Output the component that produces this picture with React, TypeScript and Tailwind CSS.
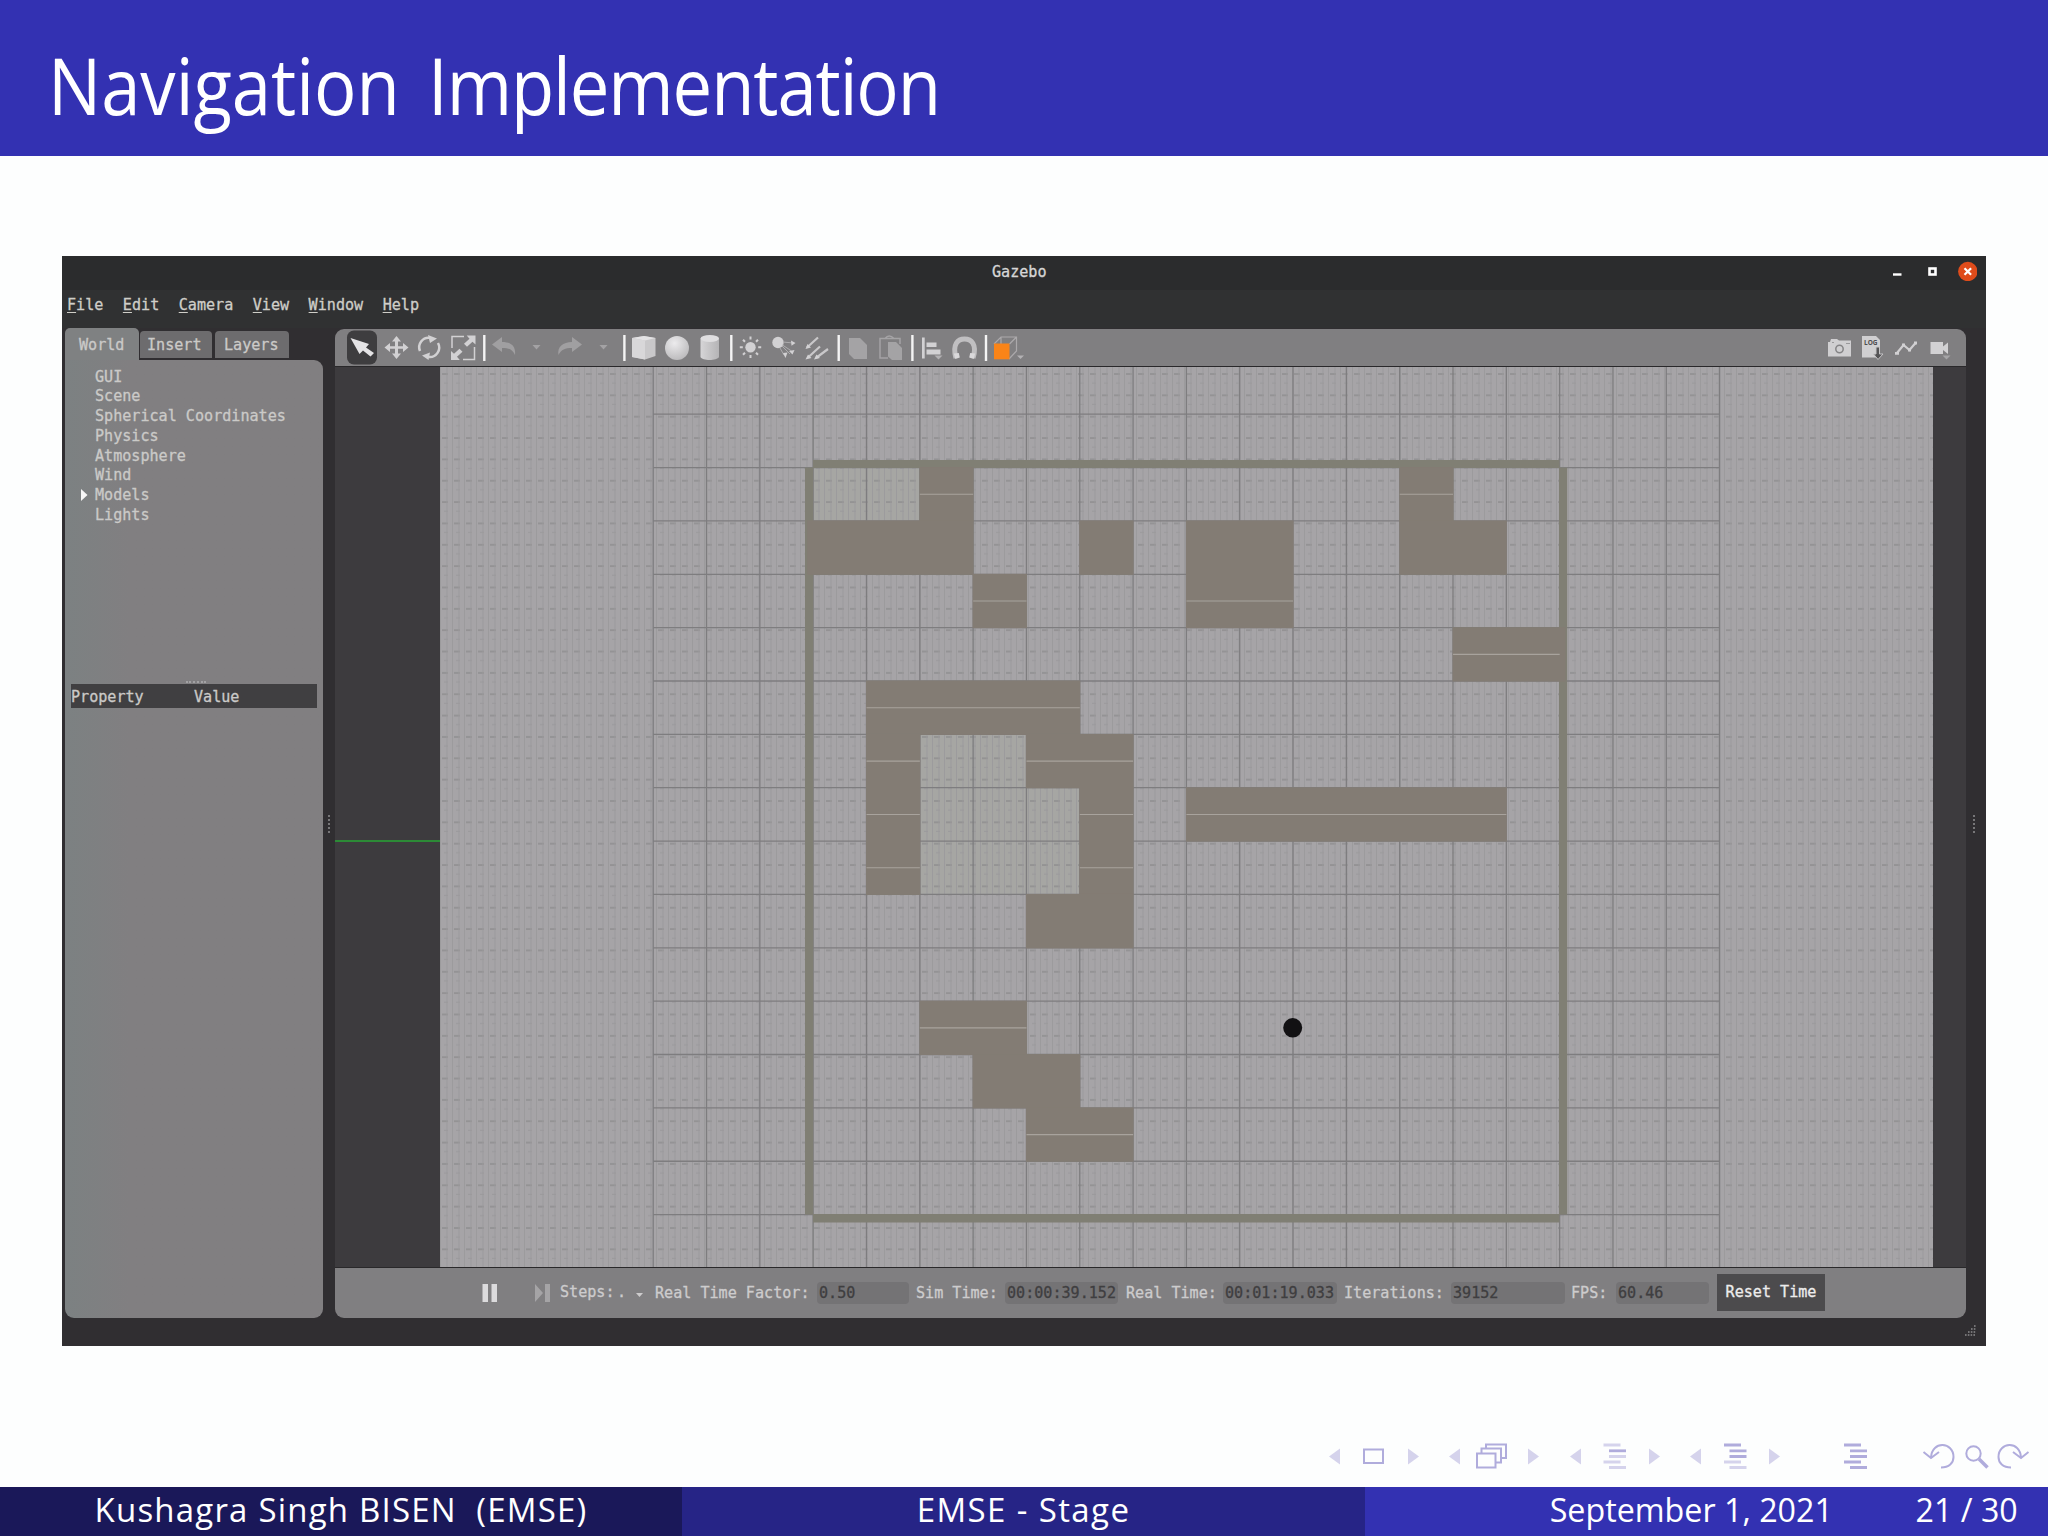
import type { ReactNode } from "react";

const mono = "font-['DejaVu_Sans_Mono',monospace]";
const sans = "font-['Open_Sans',sans-serif]";

const CELL = 53.32;
const LEFT = 813.2;
const TOP = 467.6;

// [column, row, columns, rows]
const blocks = [
  [2, 0, 1, 1],
  [-0.1, 1, 3.1, 1],
  [3, 2, 1, 1],
  [5, 1, 1, 1],
  [7, 1, 2, 2],
  [11, 0, 1, 1],
  [11, 1, 2, 1],
  [12, 3, 2.1, 1],
  [1, 4, 4, 1],
  [1, 5, 1, 3],
  [4, 5, 2, 1],
  [5, 6, 1, 2],
  [4, 8, 2, 1],
  [7, 6, 6, 1],
  [2, 10, 2, 1],
  [3, 11, 2, 1],
  [4, 12, 2, 1],
];

// [column, row, columns], the light seam halfway down a cell
const seams = [
  [2, 0, 1],
  [11, 0, 1],
  [3, 2, 1],
  [7, 2, 2],
  [12, 3, 2],
  [1, 4, 4],
  [1, 5, 1],
  [4, 5, 2],
  [1, 6, 1],
  [5, 6, 1],
  [7, 6, 6],
  [1, 7, 1],
  [5, 7, 1],
  [2, 10, 2],
  [4, 12, 2],
];

const treeItems = ["GUI", "Scene", "Spherical Coordinates", "Physics", "Atmosphere", "Wind", "Models", "Lights"];
const menuItems = ["File", "Edit", "Camera", "View", "Window", "Help"];

// every toolbar glyph shares one coordinate space, sliced by x
function Tool({ x, w, children }: { x: number; w: number; children?: ReactNode }) {
  return (
    <svg className="shrink-0" width={w} height={37} viewBox={`${x} 329 ${w} 37`} fill="#d2d1d3">
      {children}
    </svg>
  );
}

function Sep({ x, w, at }: { x: number; w: number; at: number }) {
  return (
    <Tool x={x} w={w}>
      <rect x={at - 1.2} y="335" width="2.4" height="26" fill="#f4f4f4" />
    </Tool>
  );
}

function Toolbar() {
  return (
    <div className="flex h-[37px] shrink-0 rounded-tl-[9px] rounded-tr-[9px] bg-[#807f81]">
      <Tool x={335} w={45}>
        <rect x="347" y="330.5" width="30" height="34" rx="7" fill="#3e3d3f" />
        <path d="M350.500 338 L369 344 L366 347.500 L374 353 L370.500 356.500 L363 350.500 L359.500 354 Z" fill="#e4e3e5" />
      </Tool>
      <Tool x={380} w={33}>
        <path d="M396.500 336 l4.500 5.500 h-3 v4.700 h5 v-3.200 l5.500 4.500 l-5.500 4.500 v-3.200 h-5 v4.700 h3 l-4.500 5.500 l-4.500 -5.500 h3 v-4.700 h-5 v3.200 l-5.500 -4.500 l5.500 -4.500 v3.200 h5 v-4.700 h-3 Z" />
      </Tool>
      <Tool x={413} w={33}>
        <path d="M420 351 A9.500 9.500 0 0 1 430 337.800 M438 343 A9.500 9.500 0 0 1 428.500 357" fill="none" stroke="#d2d1d3" strokeWidth="2.500" />
        <path d="M428 335 l9 3.500 l-7 4.500 Z M430 352.500 l-8 3 l6.500 4.500 Z" />
      </Tool>
      <Tool x={446} w={34}>
        <path d="M464 336.500 H452 V348 M474.500 347 V359.500 H463" fill="none" stroke="#d2d1d3" strokeWidth="1.500" />
        <path d="M475.500 335.500 v9 l-3 -2.700 l-5.500 5 l-3 -3 l5.500 -5 l-2.800 -3.300 Z M451 360 v-9 l3 2.700 l5.500 -5 l3 3 l-5.500 5 l2.800 3.300 Z" />
      </Tool>
      <Sep x={480} w={8} at={484.3} />
      <Tool x={488} w={38}>
        <path d="M492 344.500 L502 337 V342 C511 342 516 346 515 355 C512.500 349.500 509 348 502 348 V352 Z" fill="#a09fa1" />
      </Tool>
      <Tool x={526} w={24}>
        <path d="M532.500 345 h8 l-4 4.500 Z" fill="#a3a2a4" />
      </Tool>
      <Tool x={550} w={40}>
        <path d="M582 344.500 L572 337 V342 C563 342 557 347 558.500 355 C561.500 349.500 565 348 572 348 V352 Z" fill="#a09fa1" />
      </Tool>
      <Tool x={590} w={26}>
        <path d="M599.500 345 h8 l-4 4.500 Z" fill="#a3a2a4" />
      </Tool>
      <Sep x={616} w={12} at={624.4} />
      <Tool x={628} w={32}>
        <path d="M632 338 L644 336 L655.500 338 V356 L645 359.500 L632 357 Z" fill="#c9c8ca" />
        <path d="M632 338 L644 336 L655.500 338 L645 340.500 Z" fill="#e4e3e5" />
        <path d="M632 338 L645 340.500 V359.500 L632 357 Z" fill="#d8d7d9" />
      </Tool>
      <Tool x={660} w={34}>
        <defs>
          <radialGradient id="ball" cx="0.4" cy="0.3" r="0.7">
            <stop offset="0" stopColor="#ecebed" />
            <stop offset="1" stopColor="#bdbcbe" />
          </radialGradient>
        </defs>
        <circle cx="677" cy="348" r="12" fill="url(#ball)" />
      </Tool>
      <Tool x={694} w={30}>
        <defs>
          <linearGradient id="tube">
            <stop offset="0" stopColor="#d6d5d7" />
            <stop offset="1" stopColor="#b5b4b6" />
          </linearGradient>
        </defs>
        <path d="M700.500 338.500 V357 C702 361 717 361 719 357 V338.500 Z" fill="url(#tube)" />
        <ellipse cx="709.800" cy="338.500" rx="9.200" ry="3.400" fill="#dfdee0" />
      </Tool>
      <Sep x={724} w={14} at={731.3} />
      <Tool x={738} w={26}>
        <circle cx="750.500" cy="347.300" r="5.200" />
        <path d="M750.500 336.500 v3 M750.500 355 v3 M739.800 347.300 h3 M758.200 347.300 h3 M743 339.700 l2 2 M756 352.700 l2 2 M743 354.800 l2 -2 M756 341.800 l2 -2" stroke="#d2d1d3" strokeWidth="2" />
      </Tool>
      <Tool x={764} w={36}>
        <circle cx="778" cy="342.500" r="5.700" />
        <path d="M783 342 l10 1 M782.500 345 l9 6 M780 348 l4 7 M782 346 l8 8" stroke="#adacae" strokeWidth="1" />
        <path d="M791 340.500 l4.500 2.500 l-4 2.800 Z M789 351 l5.500 -1 l-2 4.500 Z M783 353 l4.500 -.5 l-2 5.500 Z" />
      </Tool>
      <Tool x={800} w={33}>
        <path d="M807 347.500 L818 337.500 M808 357.500 L820 346.500 M816 358 L828 349" stroke="#c9c8ca" strokeWidth="2.200" />
        <path d="M805.500 349 l2 -5 l3.500 3.500 Z M805.500 359.500 l2.500 -5 l3.500 3.500 Z M814 359.500 l2.500 -5 l3.500 3.500 Z" />
      </Tool>
      <Sep x={833} w={12} at={838.7} />
      <Tool x={845} w={27}>
        <path d="M849 338 h11 l7 7 v14 h-13 l-5 -5 Z" fill="#a4a3a5" />
      </Tool>
      <Tool x={872} w={34}>
        <path d="M888 358 H880 V338.500 H900 V344 M885 338.500 q4 -5 9 0" fill="none" stroke="#a4a3a5" strokeWidth="1.500" />
        <path d="M888 342 h8 l6 6 v12 h-10 l-4 -3.500 Z" fill="#a4a3a5" />
      </Tool>
      <Sep x={906} w={12} at={912.4} />
      <Tool x={918} w={31}>
        <path d="M922 337.500 h2.700 v21 h-2.700 Z M926.500 342.500 h10 v4.500 h-10 Z M926.500 349.500 h14 v5 h-14 Z" />
        <path d="M934.500 355.500 h8 l-4 4 Z" fill="#b3b2b4" />
      </Tool>
      <Tool x={949} w={31}>
        <path d="M956 358 C952 344 958 339 964.500 339 C971 339 977.500 344 973 358" fill="none" stroke="#c0bfc1" strokeWidth="5" />
        <path d="M953.800 353.500 l5 -.5 l1 4.500 l-4.500 1.500 Z M975.200 353.500 l-5 -.5 l-1 4.500 l4.500 1.500 Z" fill="#dad9db" />
      </Tool>
      <Sep x={980} w={11} at={986} />
      <Tool x={991} w={36}>
        <path d="M994 344 L1001 337 H1016.500 V351 L1009 359 M1009.500 344 L1016.500 337 M1001 337 V344" fill="none" stroke="#aba9ab" strokeWidth="1.200" />
        <rect x="994" y="343.500" width="15.500" height="15.800" fill="#fa8418" />
        <path d="M1017 355.500 h7 l-3.500 3.500 Z" fill="#b3b2b4" />
      </Tool>
      <div className="flex-1" />
      <Tool x={1822} w={34}>
        <path d="M1828 342 h2 l1 -3 h6 l2 1.500 h12 v16 h-23 Z" fill="#d0cfd1" />
        <circle cx="1839.500" cy="349" r="3.700" fill="none" stroke="#858486" strokeWidth="1.500" />
        <path d="M1832 342.500 h2 M1846 343.500 h4" stroke="#99989a" />
      </Tool>
      <Tool x={1856} w={31}>
        <path d="M1862 336 h14 l4 4 v17.500 h-18 Z" fill="#d0cfd1" />
        <text x="1864" y="345" className={`${sans} font-bold`} fontSize="6.500" textLength="13.500" fill="#4e4d4f">LOG</text>
        <path d="M1873.500 354 h2.500 v-7 h3.500 v7 h3.500 l-5 5.500 Z" fill="#555456" stroke="#c5c4c6" />
      </Tool>
      <Tool x={1887} w={35}>
        <path d="M1897 353 L1903.500 345 L1909.500 350 L1915.500 343" fill="none" stroke="#d0cfd1" strokeWidth="2.200" />
        <path d="M1895 352 h4 v2.800 h-4 Z M1902 343.500 h3 v3 h-3 Z M1908 348.500 h3 v3 h-3 Z M1914 341.500 h3 v3 h-3 Z" />
      </Tool>
      <Tool x={1922} w={44}>
        <path d="M1930.500 342 h12.500 v4.500 l5 -4 v11.500 l-5 -4 v4 h-12.500 Z" />
        <path d="M1942.500 355.500 h8 l-4 4 Z" fill="#a6a5a7" />
      </Tool>
    </div>
  );
}

function Scene() {
  const cols = Array.from({ length: 21 }, (_, i) => 653.2 + i * CELL);
  const rows = Array.from({ length: 16 }, (_, i) => 414.2 + i * 53.36);
  return (
    <div className="h-[902px] shrink-0 border-y border-[#29282a]">
      <svg className="block" width={1631} height={900} viewBox="335 367 1631 900">
        <defs>
          <pattern id="weave" x="440" y="373" width="12" height="21.350" patternUnits="userSpaceOnUse">
            <path d="M2 1 H8" stroke="#8d8c8e" strokeWidth="1.400" />
            <path d="M4 10 H8" stroke="#9a999b" strokeWidth="1" />
            <path d="M0.500 0 V22 M7 0 V22" stroke="#9b9a9c" strokeWidth="0.900" />
          </pattern>
        </defs>
        <rect x="335" y="367" width="1631" height="900" fill="#3d3b3e" />
        <path d="M335 841 H440" stroke="#2c8a36" strokeWidth="2" />
        <rect x="440" y="367" width="1493" height="900" fill="#a6a4a7" />
        <g fill="#a6a6a3">
          <rect x={LEFT} y={TOP} width={CELL * 2} height={CELL} />
          <rect x={LEFT + 2 * CELL} y={TOP + 5 * CELL} width={CELL * 3} height={CELL * 3} />
        </g>
        <rect x="440" y="367" width="1493" height="900" fill="url(#weave)" />
        <g stroke="#7e7d7f" strokeWidth="1.300">
          {cols.map((x) => (
            <path key={x} d={`M${x} 367 V1267`} />
          ))}
          {rows.map((y) => (
            <path key={y} d={`M653.200 ${y} H1719.600`} />
          ))}
        </g>
        <g fill="#807f74">
          <rect x="813" y="460" width="746.500" height="8" />
          <rect x="805" y="467.600" width="8.200" height="747" />
          <rect x="1559" y="467.600" width="8.200" height="747" />
          <rect x="813" y="1214" width="746.500" height="8.500" />
        </g>
        <g fill="#837c74">
          {blocks.map(([c, r, w, h]) => (
            <rect key={`${c}-${r}`} x={LEFT + c * CELL - 0.5} y={TOP + r * 53.36 - 0.5} width={w * CELL + 1} height={h * 53.36 + 1} />
          ))}
        </g>
        <g stroke="#a8a39d" strokeWidth="1.100">
          {seams.map(([c, r, w]) => (
            <path key={`${c}-${r}`} d={`M${LEFT + c * CELL} ${TOP + (r + 0.5) * 53.36} h${w * CELL}`} />
          ))}
        </g>
        <ellipse cx="1292.700" cy="1027.800" rx="9.500" ry="9.700" fill="#121113" />
      </svg>
    </div>
  );
}

function Field({ className, children }: { className: string; children: ReactNode }) {
  return <div className={`h-[22px] shrink-0 rounded-sm bg-[#747375] pl-[2px] leading-[22px] text-[#3f3e40] ${className}`}>{children}</div>;
}

function StatusBar() {
  return (
    <div className="flex h-[50px] items-center rounded-b-[9px] bg-[#807f81] pb-px whitespace-pre text-[#cdcccd]">
      <svg className="ml-[147px] shrink-0" width="78" height="18" viewBox="482 1284 78 18" fill="#dcdbdd">
        <path d="M482.500 1284 h5.500 v18 h-5.500 Z M491.500 1284 h5.500 v18 h-5.500 Z" />
        <path d="M535 1284 l8 9 l-8 9 Z M545 1284 h5 v18 h-5 Z" fill="#a5a4a6" />
      </svg>
      <span className="w-[57px] shrink-0">Steps:</span>
      <span className="w-[18px] shrink-0 leading-none">.</span>
      <svg className="mt-1 shrink-0" width="20" height="6" viewBox="0 0 20 6">
        <path d="M1 1 h7 l-3.500 4 Z" fill="#cdcccd" />
      </svg>
      <span className="w-[162px] shrink-0 pt-px">Real Time Factor:</span>
      <Field className="w-[92px]">0.50</Field>
      <span className="ml-[7px] w-[89px] shrink-0 pt-px">Sim Time:</span>
      <Field className="w-[113px]">00:00:39.152</Field>
      <span className="ml-[8px] w-[97px] shrink-0 pt-px">Real Time:</span>
      <Field className="w-[114px]">00:01:19.033</Field>
      <span className="ml-[7px] w-[107px] shrink-0 pt-px">Iterations:</span>
      <Field className="w-[114px]">39152</Field>
      <span className="ml-[6px] w-[45px] shrink-0 pt-px">FPS:</span>
      <Field className="w-[93px]">60.46</Field>
      <button className="ml-[8px] h-[37px] w-[108px] shrink-0 bg-[#4c4b4d] text-[#ececec]">Reset Time</button>
    </div>
  );
}

function SidePanel() {
  return (
    <div className="flex w-[258px] shrink-0 flex-col text-[#cbcac8]">
      <div className="flex h-[31px] items-end">
        <div className="h-[32px] w-[74px] rounded-t-[5px] bg-[#7f8182] pl-[14px] leading-[35px]">World</div>
        <div className="mb-[2px] ml-px h-[27px] w-[72px] rounded-t-[4px] bg-[#6d6c6e] pl-[7px] leading-[29px]">Insert</div>
        <div className="mb-[2px] ml-[3px] h-[27px] w-[74px] rounded-t-[4px] bg-[#6d6c6e] pl-[9px] leading-[29px]">Layers</div>
      </div>
      <div className="flex-1 rounded-tr-[9px] rounded-b-[9px] bg-linear-to-r from-[#7c8182] via-[#817f81] via-25% to-[#817f81]">
        <ul className="h-[321px] pt-[7px]">
          {treeItems.map((item) => (
            <li key={item} className="flex h-[19.75px] items-center">
              <svg className="mr-[6px] ml-[15px] shrink-0" width="9" height="12" viewBox="0 0 9 12">
                {item === "Models" && <path d="M1 0 L7.500 6 L1 12 Z" fill="#f7f7f7" />}
              </svg>
              <span>{item}</span>
            </li>
          ))}
        </ul>
        <div className="ml-[121px] h-[3px] w-[20px] border-t-2 border-dotted border-[#a3a2a4]" />
        <div className="mx-[6px] flex h-[24px] bg-[#403f41] leading-[26px]">
          <span className="w-[123px]">Property</span>
          <span>Value</span>
        </div>
      </div>
    </div>
  );
}

function GazeboWindow() {
  return (
    <div className={`${mono} ml-[62px] flex h-[1090px] w-[1924px] flex-col bg-[#302e31] text-[15.1px] [-webkit-text-stroke:0.3px]`}>
      <div className="flex h-[34px] shrink-0 items-center justify-between bg-[#2b2c2d] pr-[9px] pl-[930px] text-[#d6d6d6]">
        <span className="pb-px">Gazebo</span>
        <svg className="mb-[5px]" width="86" height="20" viewBox="1891 260 86 20">
          <path d="M1893 273.500 h8.500" stroke="#fff" strokeWidth="2.400" />
          <rect x="1929.500" y="267.500" width="6" height="6" fill="none" stroke="#fff" strokeWidth="2.600" />
          <circle cx="1967.800" cy="270.500" r="9.700" fill="#df4c1b" />
          <path d="M1964.500 267.200 l6.600 6.600 M1971.100 267.200 l-6.600 6.600" stroke="#fff" strokeWidth="2.200" />
        </svg>
      </div>
      <div className="flex h-[38px] shrink-0 gap-[19.5px] bg-[#303132] pl-[5px] leading-[31px] text-[#cfcec8]">
        {menuItems.map((item) => (
          <span key={item}>
            <u className="underline-offset-2">{item[0]}</u>
            {item.slice(1)}
          </span>
        ))}
      </div>
      <div className="flex h-[990px] shrink-0 pt-px pl-[3px]">
        <SidePanel />
        <div className="flex w-[12px] flex-col items-center justify-center">
          <span className="h-[18px] border-r-2 border-dotted border-[#777678]" />
        </div>
        <div className="flex w-[1631px] flex-col">
          <Toolbar />
          <Scene />
          <StatusBar />
        </div>
        <div className="flex flex-1 flex-col items-center justify-center">
          <span className="mr-[5px] h-[18px] border-r-2 border-dotted border-[#777678]" />
        </div>
      </div>
      <div className="flex flex-1 items-center justify-end pr-[9px] pb-[4px]">
        <svg width="13" height="12" viewBox="0 0 13 12">
          <path d="M1 11 H12 M4 8 H12 M7 5 H12 M10 2 H12" stroke="#8b8a8c" strokeWidth="1.600" strokeDasharray="1.600 1.200" />
        </svg>
      </div>
    </div>
  );
}

function Arrows({ x, to }: { x: number; to: number }) {
  return <path d={`M${x + 11} 1448.500 v16 l-11 -8 Z M${to} 1448.500 v16 l11 -8 Z`} fill="#d5d3ec" />;
}

function SlideControls() {
  return (
    <svg className="ml-[1320px]" width="720" height="36" viewBox="1320 1438 720 36" fill="none" stroke="#b0acdc" strokeWidth="2">
      <g stroke="none">
        <Arrows x={1329} to={1408} />
        <Arrows x={1449} to={1528} />
        <Arrows x={1570} to={1649} />
        <Arrows x={1690} to={1769} />
      </g>
      <rect x="1364" y="1449.500" width="19" height="13.500" />
      <path d="M1477 1453.500 h18.500 v14 h-18.500 Z M1481.500 1453 v-4.500 h19.500 v14 h-5 M1486 1448 v-3.500 h20 v13.500 h-5" />
      <g strokeWidth="2.800">
        <path d="M1603.500 1445 h17 M1609 1456.500 h17 M1603.500 1462 h17 M1609 1467.500 h17" stroke="#d5d3ec" />
        <path d="M1609 1450.800 h17" />
        <path d="M1724 1445 h17 M1729.500 1450.800 h17 M1729.500 1456.500 h17" />
        <path d="M1724 1462 h17 M1729.500 1467.500 h17" stroke="#d5d3ec" />
        <path d="M1844 1445 h17 M1850 1450.800 h17 M1850 1456.500 h17 M1844 1462 h17 M1850 1467.500 h17" />
      </g>
      <path d="M1931 1457.500 C1932 1440 1953.500 1442 1953.500 1457 C1953.500 1463 1949 1467.500 1941 1467.500 M1923.500 1452 L1931 1458 L1939 1452" />
      <circle cx="1973.500" cy="1453.500" r="7.200" />
      <path d="M1979 1459 L1987.500 1467.500" strokeWidth="3.600" />
      <path d="M2021 1457.500 C2020 1440 1998.500 1442 1998.500 1457 C1998.500 1463 2003 1467.500 2011 1467.500 M2013 1452 L2021 1458 L2028.500 1452" />
    </svg>
  );
}

export default function App() {
  return (
    <div className={`${sans} flex h-[1536px] w-[2048px] flex-col overflow-hidden bg-[#fdfefe]`}>
      <header className="h-[156px] shrink-0 bg-[#3331b2] pl-[48px] text-white">
        <h1 className="w-max origin-left scale-x-[0.905] text-[78px] leading-[170px] whitespace-pre">
          <span className="[word-spacing:11px]">Navigation </span>
          <span className="tracking-[-1.2px]">Implementation</span>
        </h1>
      </header>

      <main className="h-[1282px] shrink-0 pt-[100px]">
        <GazeboWindow />
      </main>

      <SlideControls />

      <footer className="mt-auto flex h-[49px] shrink-0 text-[33px] leading-[46px] whitespace-pre text-white">
        <div className="flex w-[682px] justify-center bg-[#1a1859]">
          <span className="tracking-[1.2px]">Kushagra Singh BISEN  (EMSE)</span>
        </div>
        <div className="flex w-[683px] justify-center bg-[#262486]">
          <span className="tracking-[1.4px]">EMSE - Stage</span>
        </div>
        <div className="flex w-[683px] justify-end bg-[#3331b2] pr-[30px]">
          <span className="mr-[80px] origin-right scale-x-[0.977]">September 1, 2021</span>
          <span className="origin-right scale-x-[0.975]">21 / 30</span>
        </div>
      </footer>
    </div>
  );
}
